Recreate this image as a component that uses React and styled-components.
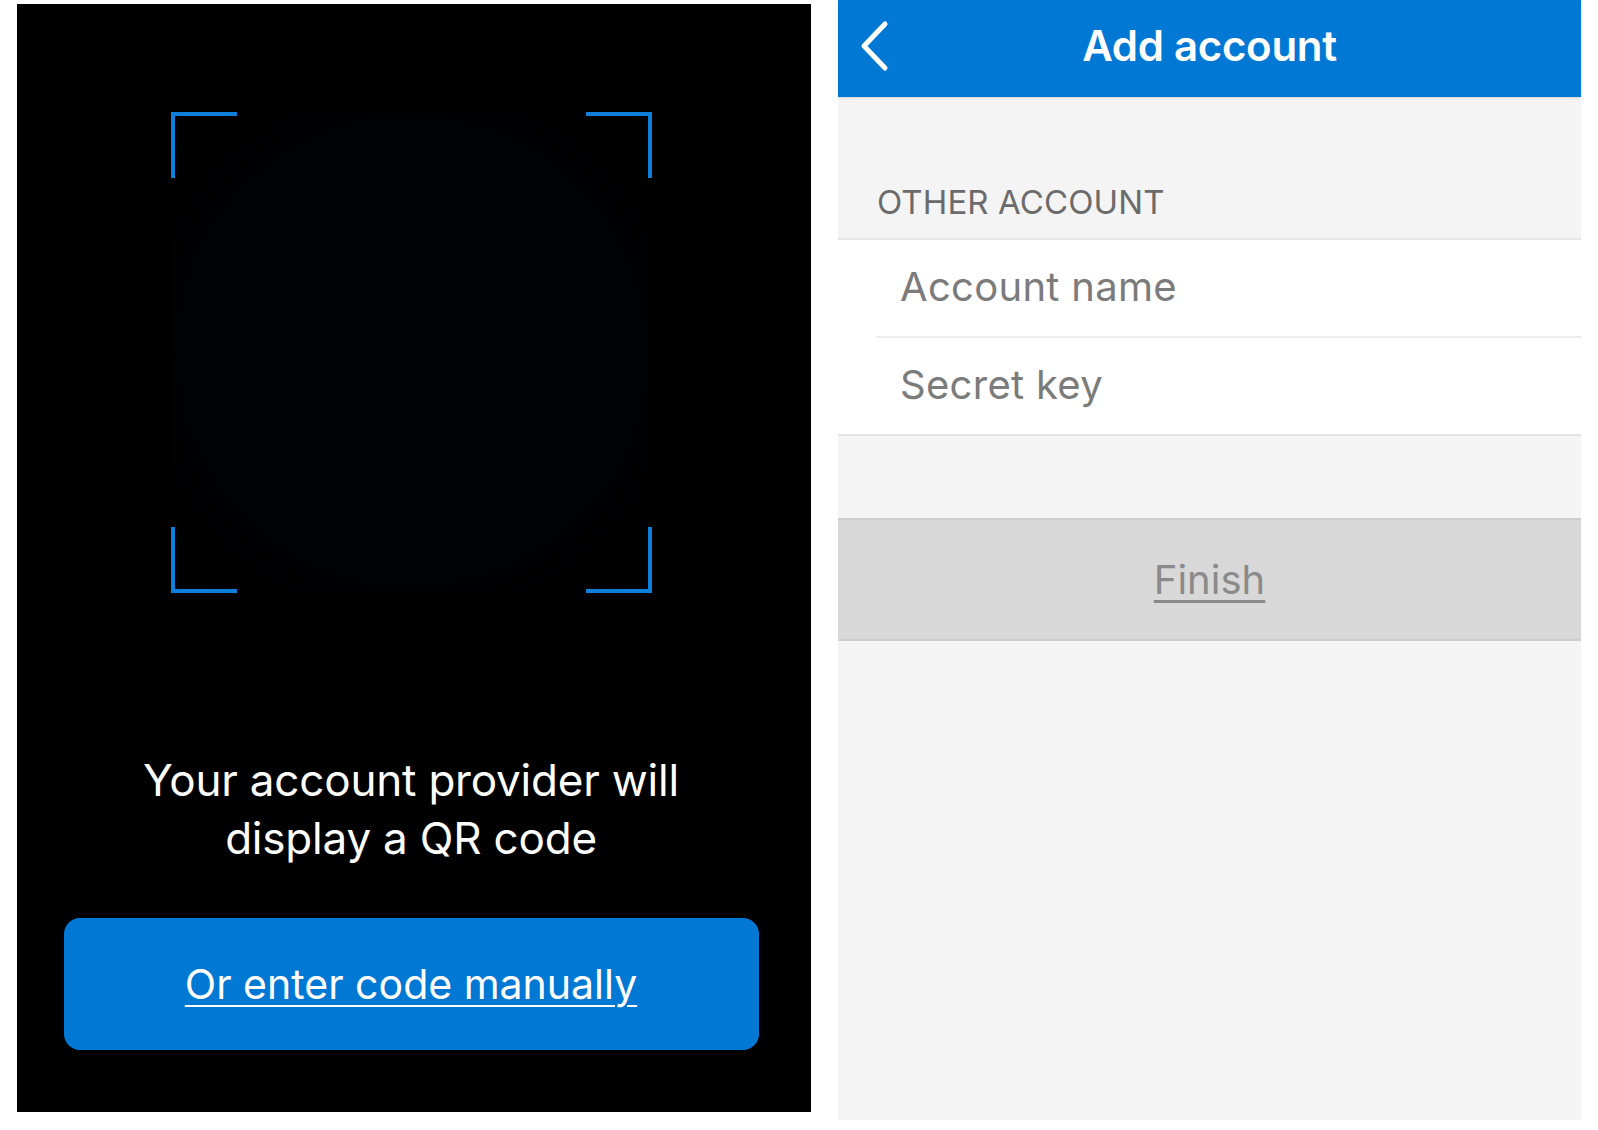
import React from "react";
import styled, { createGlobalStyle } from "styled-components";

const GlobalStyle = createGlobalStyle`
  html, body {
    margin: 0;
    padding: 0;
    background: #fff;
    font-family: Inter, Roboto, "Liberation Sans", Arial, sans-serif;
  }
`;

const Page = styled.div`
  display: flex;
  align-items: flex-start;
  gap: 27px;
  padding-left: 17px;
  width: 1598px;
  height: 1130px;
  box-sizing: border-box;
`;

/* left: scanner screen */
const ScannerScreen = styled.section`
  width: 794px;
  height: 1108px;
  margin-top: 4px;
  background: #000;
  display: flex;
  flex-direction: column;
  align-items: center;
  padding: 108px 6px 0 0;
  box-sizing: border-box;
`;

const ScanFrame = styled.div`
  width: 481px;
  height: 481px;
  display: grid;
  grid-template-columns: 1fr 1fr;
  grid-template-rows: 1fr 1fr;
  background: radial-gradient(circle at 50% 50%, #020307 0%, #010204 55%, #000 100%);
`;

const Corner = styled.span`
  width: 62px;
  height: 62px;
  border: 0 solid #0f7fdc;
  justify-self: ${(p) => (p.$right ? "end" : "start")};
  align-self: ${(p) => (p.$bottom ? "end" : "start")};
  ${(p) => (p.$bottom ? "border-bottom-width: 4px;" : "border-top-width: 4px;")}
  ${(p) => (p.$right ? "border-right-width: 4px;" : "border-left-width: 4px;")}
`;

const Prompt = styled.p`
  margin: 158px 0 0;
  color: #fff;
  font-size: 44px;
  line-height: 58px;
  letter-spacing: -0.2px;
  text-align: center;
`;

const ManualButton = styled.button`
  margin-top: 51px;
  width: 695px;
  height: 132px;
  border: none;
  border-radius: 16px;
  background: #0078d4;
  color: #fff;
  font-family: inherit;
  font-size: 41px;
  text-decoration: underline;
  text-underline-offset: 6px;
  text-decoration-thickness: 2px;
  cursor: pointer;
`;

/* right: add account form */
const FormScreen = styled.section`
  width: 743px;
  height: 1120px;
  background: #f4f4f4;
  display: flex;
  flex-direction: column;
`;

const Header = styled.header`
  height: 97px;
  flex-shrink: 0;
  box-sizing: border-box;
  padding-bottom: 6px;
  background: #0078d4;
  display: grid;
  grid-template-columns: 1fr auto 1fr;
  align-items: center;
  box-shadow: 0 1px 2px rgba(0, 0, 0, 0.12);
`;

const BackButton = styled.button`
  justify-self: start;
  margin-left: 20px;
  padding: 0;
  border: none;
  background: none;
  display: flex;
  cursor: pointer;
`;

const Title = styled.h1`
  margin: 0;
  color: #fff;
  font-size: 42px;
  font-weight: 600;
  letter-spacing: -0.3px;
`;

const SectionLabel = styled.div`
  height: 141px;
  display: flex;
  align-items: flex-end;
  padding: 0 0 20px 39px;
  box-sizing: border-box;
  color: #6b6b6b;
  font-size: 33px;
  line-height: 32px;
  letter-spacing: 0.1px;
  text-transform: uppercase;
`;

const FieldGroup = styled.div`
  background: #fff;
  border-top: 2px solid #e6e6e6;
  border-bottom: 2px solid #e3e3e3;
`;

const Field = styled.input`
  display: block;
  width: 100%;
  height: 96px;
  box-sizing: border-box;
  border: none;
  outline: none;
  background: transparent;
  padding: 0 0 4px 62px;
  font-family: inherit;
  font-size: 40px;
  letter-spacing: 0.3px;
  color: #333;

  &::placeholder {
    color: #7b7b7b;
  }
`;

const Divider = styled.div`
  height: 2px;
  margin-left: 38px;
  background: #ececec;
`;

const FinishButton = styled.button`
  margin-top: 82px;
  height: 123px;
  border: none;
  border-top: 2px solid #cdcdcd;
  border-bottom: 2px solid #cdcdcd;
  background: #d8d8d8;
  color: #8a8a8a;
  font-family: inherit;
  font-size: 40px;
  text-decoration: underline;
  text-underline-offset: 6px;
  text-decoration-thickness: 3px;
`;

const ChevronLeft = () => (
  <svg width="32" height="52" viewBox="0 0 32 52" fill="none">
    <path
      d="M27 4 L6 26 L27 48"
      stroke="#fff"
      strokeWidth="5"
      strokeLinecap="round"
      strokeLinejoin="round"
    />
  </svg>
);

export default function App() {
  return (
    <>
      <GlobalStyle />
      <Page>
        <ScannerScreen>
          <ScanFrame>
            <Corner />
            <Corner $right />
            <Corner $bottom />
            <Corner $bottom $right />
          </ScanFrame>
          <Prompt>
            Your account provider will
            <br />
            display a QR code
          </Prompt>
          <ManualButton>Or enter code manually</ManualButton>
        </ScannerScreen>

        <FormScreen>
          <Header>
            <BackButton aria-label="Back">
              <ChevronLeft />
            </BackButton>
            <Title>Add account</Title>
          </Header>
          <SectionLabel>Other account</SectionLabel>
          <FieldGroup>
            <Field placeholder="Account name" />
            <Divider />
            <Field placeholder="Secret key" />
          </FieldGroup>
          <FinishButton disabled>Finish</FinishButton>
        </FormScreen>
      </Page>
    </>
  );
}
